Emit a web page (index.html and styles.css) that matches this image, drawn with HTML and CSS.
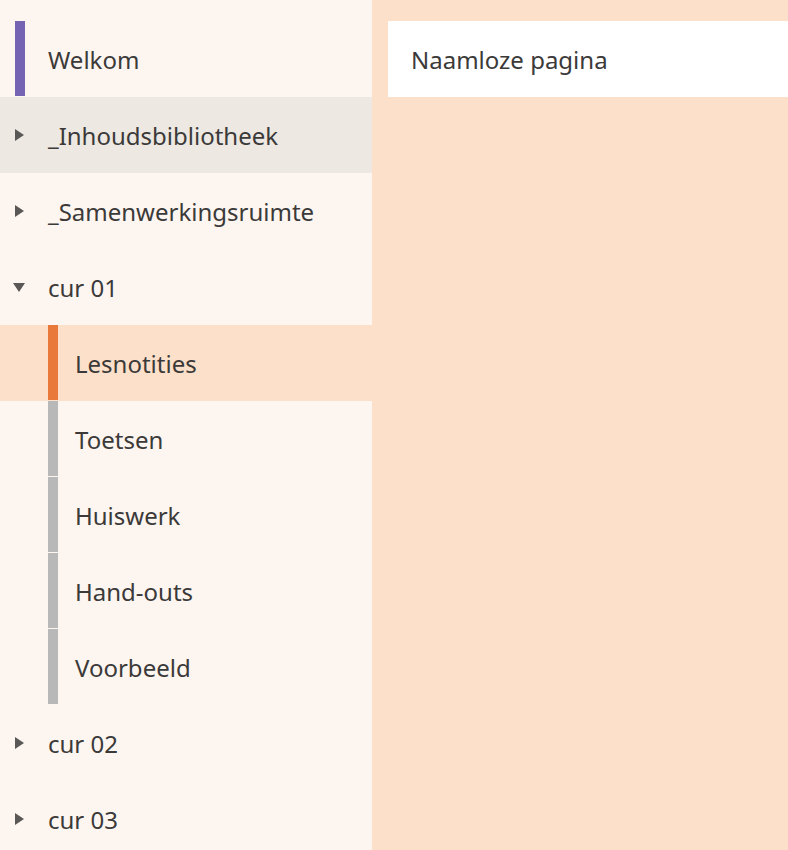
FILE: index.html
```html
<!DOCTYPE html>
<html lang="nl">
<head>
  <meta charset="UTF-8">
  <meta name="viewport" content="width=device-width, initial-scale=1.0">
  <title>Notitieblok</title>
  <link rel="stylesheet" href="styles.css">
</head>
<body>
  <div class="app">
    <nav class="sections">
      <div class="item welcome">
        <span class="bar purple"></span>
        <span class="label">Welkom</span>
      </div>
      <div class="item group hover">
        <span class="twisty"><span class="caret right"></span></span>
        <span class="label">_Inhoudsbibliotheek</span>
      </div>
      <div class="item group">
        <span class="twisty"><span class="caret right"></span></span>
        <span class="label">_Samenwerkingsruimte</span>
      </div>
      <div class="item group">
        <span class="twisty"><span class="caret down"></span></span>
        <span class="label">cur 01</span>
      </div>
      <div class="item sub selected">
        <span class="bar orange"></span>
        <span class="label">Lesnotities</span>
      </div>
      <div class="item sub">
        <span class="bar gray"></span>
        <span class="label">Toetsen</span>
      </div>
      <div class="item sub">
        <span class="bar gray"></span>
        <span class="label">Huiswerk</span>
      </div>
      <div class="item sub">
        <span class="bar gray"></span>
        <span class="label">Hand-outs</span>
      </div>
      <div class="item sub">
        <span class="bar gray"></span>
        <span class="label">Voorbeeld</span>
      </div>
      <div class="item group">
        <span class="twisty"><span class="caret right"></span></span>
        <span class="label">cur 02</span>
      </div>
      <div class="item group">
        <span class="twisty"><span class="caret right"></span></span>
        <span class="label">cur 03</span>
      </div>
    </nav>

    <main class="pages">
      <div class="page">Naamloze pagina</div>
    </main>
  </div>
</body>
</html>
```

FILE: styles.css
```css
body {
  margin: 0;
  font-family: "Noto Sans", "Open Sans", sans-serif;
  color: #3b3a39;
  overflow: hidden;
}

.app {
  display: flex;
  height: 850px;
}

.sections {
  width: 372px;
  flex-shrink: 0;
  padding-top: 21px;
  background-color: #fdf5f0;
}

.item {
  display: flex;
  align-items: center;
  height: 76px;
  font-size: 24px;
}

.item.hover {
  background-color: #ede8e2;
}

.bar {
  align-self: stretch;
  width: 10px;
  margin-bottom: 1px;
}

.purple {
  background-color: #7462b3;
}

.orange {
  background-color: #e8793a;
}

.gray {
  background-color: #b8b8b8;
}

.welcome {
  padding-left: 15px;
}

.welcome .label {
  margin-left: 23px;
}

.group {
  padding-left: 13px;
}

.twisty {
  display: flex;
  align-items: center;
  width: 35px;
}

.caret {
  width: 0;
  height: 0;
}

.caret.right {
  margin-left: 2px;
  border-top: 6.5px solid transparent;
  border-bottom: 6.5px solid transparent;
  border-left: 9px solid #5a5856;
}

.caret.down {
  border-left: 6.5px solid transparent;
  border-right: 6.5px solid transparent;
  border-top: 9px solid #5a5856;
}

.sub {
  padding-left: 48px;
}

.sub .label {
  margin-left: 17px;
}

.sub.selected {
  background-color: #fce0ca;
}

.pages {
  flex: 1;
  padding: 21px 0 0 16px;
  background-color: #fce0ca;
}

.page {
  display: flex;
  align-items: center;
  height: 76px;
  padding-left: 23px;
  background-color: #ffffff;
  font-size: 24px;
}
```
